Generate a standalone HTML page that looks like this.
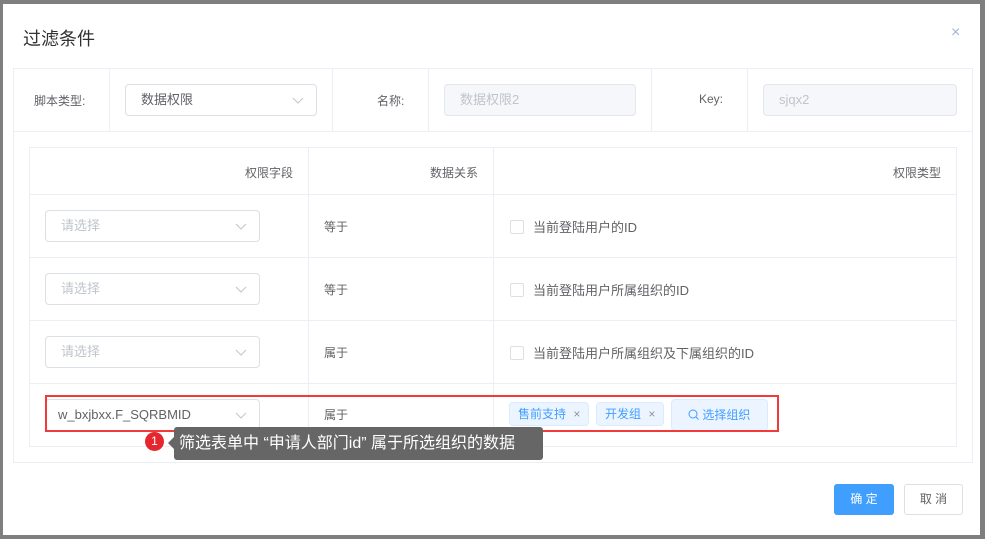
<!DOCTYPE html>
<html><head><meta charset="utf-8"><style>
*{box-sizing:border-box;margin:0;padding:0}
body{width:985px;height:539px;background:#7f7f7f;font-family:"Liberation Sans","Noto Sans CJK SC",sans-serif;position:relative;overflow:hidden;color:#606266;font-size:13px}
.a{position:absolute}
.modal{left:3px;top:4px;width:977px;height:531px;background:#fff}
.b{border:1px solid #ebeef5}
.sel{background:#fff;border:1px solid #dcdfe6;border-radius:4px;height:32px;padding-left:15px;line-height:30px;font-size:13px}
.sel svg{position:absolute;right:12px;top:12px}
.inp{background:#f5f7fa;border:1px solid #e4e7ed;border-radius:4px;height:32px;padding-left:15px;line-height:30px;color:#c0c4cc}
.ph{color:#c0c4cc}
.cb{width:14px;height:14px;border:1px solid #dcdfe6;border-radius:2px}
.tag{background:#ecf5ff;border:1px solid #d9ecff;color:#409eff;border-radius:4px;height:24px;line-height:22px;padding:0 8px;font-size:12px}
</style></head><body>
<div class="a modal"></div>
<div class="a" style="left:23px;top:25px;font-size:18px;color:#303133">过滤条件</div>
<div class="a" style="left:951px;top:24px;font-size:16px;color:#a0b4d8">×</div>
<div class="a b" style="left:13px;top:68px;width:960px;height:395px"></div>
<div class="a" style="left:14px;top:131px;width:958px;height:1px;background:#ebeef5"></div>
<div class="a" style="left:109px;top:69px;width:1px;height:62px;background:#ebeef5"></div>
<div class="a" style="left:332px;top:69px;width:1px;height:62px;background:#ebeef5"></div>
<div class="a" style="left:428px;top:69px;width:1px;height:62px;background:#ebeef5"></div>
<div class="a" style="left:651px;top:69px;width:1px;height:62px;background:#ebeef5"></div>
<div class="a" style="left:747px;top:69px;width:1px;height:62px;background:#ebeef5"></div>
<div class="a" style="left:34px;top:92px;font-size:12px">脚本类型:</div>
<div class="a sel" style="left:125px;top:84px;width:192px">数据权限<svg width="12" height="8"><path d="M1 1l5 5 5-5" stroke="#c0c4cc" fill="none"/></svg></div>
<div class="a" style="left:377px;top:92px;font-size:12px">名称:</div>
<div class="a inp" style="left:444px;top:84px;width:192px">数据权限2</div>
<div class="a" style="left:699px;top:92px;font-size:12px">Key:</div>
<div class="a inp" style="left:763px;top:84px;width:194px">sjqx2</div>
<div class="a b" style="left:29px;top:147px;width:928px;height:300px"></div>
<div class="a" style="left:30px;top:194px;width:926px;height:1px;background:#ebeef5"></div>
<div class="a" style="left:30px;top:257px;width:926px;height:1px;background:#ebeef5"></div>
<div class="a" style="left:30px;top:320px;width:926px;height:1px;background:#ebeef5"></div>
<div class="a" style="left:30px;top:383px;width:926px;height:1px;background:#ebeef5"></div>
<div class="a" style="left:308px;top:148px;width:1px;height:298px;background:#ebeef5"></div>
<div class="a" style="left:493px;top:148px;width:1px;height:298px;background:#ebeef5"></div>
<div class="a" style="left:245px;top:164px;font-size:12px">权限字段</div>
<div class="a" style="left:430px;top:164px;font-size:12px">数据关系</div>
<div class="a" style="left:893px;top:164px;font-size:12px">权限类型</div>

<div class="a sel ph" style="left:45px;top:210px;width:215px">请选择<svg width="12" height="8"><path d="M1 1l5 5 5-5" stroke="#c0c4cc" fill="none"/></svg></div>
<div class="a" style="left:324px;top:218px;font-size:12px">等于</div>
<div class="a cb" style="left:510px;top:220px"></div>
<div class="a" style="left:533px;top:217px">当前登陆用户的ID</div>

<div class="a sel ph" style="left:45px;top:273px;width:215px">请选择<svg width="12" height="8"><path d="M1 1l5 5 5-5" stroke="#c0c4cc" fill="none"/></svg></div>
<div class="a" style="left:324px;top:281px;font-size:12px">等于</div>
<div class="a cb" style="left:510px;top:283px"></div>
<div class="a" style="left:533px;top:280px">当前登陆用户所属组织的ID</div>

<div class="a sel ph" style="left:45px;top:336px;width:215px">请选择<svg width="12" height="8"><path d="M1 1l5 5 5-5" stroke="#c0c4cc" fill="none"/></svg></div>
<div class="a" style="left:324px;top:344px;font-size:12px">属于</div>
<div class="a cb" style="left:510px;top:346px"></div>
<div class="a" style="left:533px;top:343px">当前登陆用户所属组织及下属组织的ID</div>

<div class="a sel" style="left:45px;top:399px;width:215px;padding-left:12px">w_bxjbxx.F_SQRBMID<svg width="12" height="8"><path d="M1 1l5 5 5-5" stroke="#c0c4cc" fill="none"/></svg></div>
<div class="a" style="left:324px;top:406px;font-size:12px">属于</div>
<div class="a tag" style="left:509px;top:402px">售前支持 <span style="color:#909399;margin-left:4px">×</span></div>
<div class="a tag" style="left:596px;top:402px">开发组 <span style="color:#909399;margin-left:4px">×</span></div>
<div class="a tag" style="left:671px;top:399px;height:32px;line-height:30px;width:97px;padding-left:16px;font-size:12px">
<svg width="11" height="11" style="vertical-align:-1px"><circle cx="5" cy="5" r="4" stroke="#409eff" fill="none"/><path d="M8 8l2.5 2.5" stroke="#409eff"/></svg> 选择组织</div>
<div class="a" style="left:45px;top:395px;width:734px;height:37px;border:2px solid #f23a3a"></div>
<div class="a" style="left:174px;top:427px;width:369px;height:33px;background:#666;border-radius:3px;color:#fff;font-size:16px;line-height:33px;padding-left:5px;white-space:nowrap">筛选表单中 “申请人部门id” 属于所选组织的数据</div>
<div class="a" style="left:168px;top:437px;width:0;height:0;border:6px solid transparent;border-right-color:#666;border-left:0"></div>
<div class="a" style="left:145px;top:432px;width:19px;height:19px;border-radius:50%;background:#e5262f;color:#fff;font-size:12px;text-align:center;line-height:19px">1</div>
<div class="a" style="left:834px;top:484px;width:60px;height:31px;background:#409eff;border-radius:3px;color:#fff;font-size:12px;text-align:center;line-height:31px">确 定</div>
<div class="a" style="left:904px;top:484px;width:59px;height:31px;border:1px solid #dcdfe6;border-radius:3px;color:#606266;font-size:12px;text-align:center;line-height:29px">取 消</div>
</body></html>
